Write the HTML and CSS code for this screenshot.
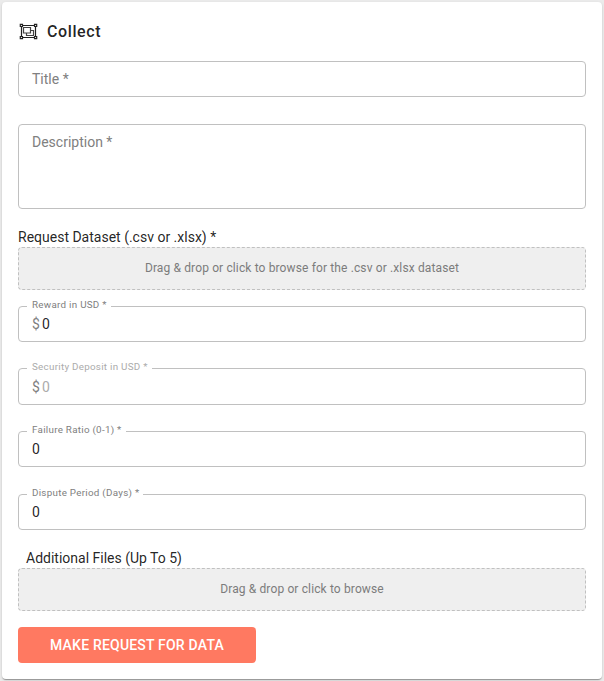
FILE: index.html
```html
<!DOCTYPE html>
<html lang="en">
<head>
<meta charset="utf-8">
<title>Collect</title>
<link rel="stylesheet" href="styles.css">
</head>
<body>
<main class="card">
  <header class="header">
    <svg class="icon" width="19" height="17" viewBox="0 0 19 17" fill="none" stroke="#222">
      <path d="M3 2.500h13M3 14.500h13M2.500 3v11M16.500 3v11" stroke-width="1.200"/>
      <path d="M4.500 4.500h7v5.500h-7zM12 7.500h2.500v5H7.500v-2" stroke="#444" stroke-width="1.200"/>
      <g fill="#fff" stroke-width="1.200"><path d="M1.300 1.300h2.200v2.200h-2.200zM15.500 1.300h2.200v2.200h-2.200zM1.300 13.500h2.200v2.200h-2.200zM15.500 13.500h2.200v2.200h-2.200z"/></g>
    </svg>
    <h1 class="title">Collect</h1>
  </header>
  <div class="field placeholder">Title *</div>
  <div class="field area placeholder">Description *</div>
  <div class="caption">Request Dataset (.csv or .xlsx) *</div>
  <div class="dropzone">Drag &amp; drop or click to browse for the .csv or .xlsx dataset</div>
  <div class="field reward"><span class="label">Reward in USD *</span><span class="prefix">$</span>0</div>
  <div class="field deposit disabled"><span class="label">Security Deposit in USD *</span><span class="prefix">$</span>0</div>
  <div class="field ratio"><span class="label">Failure Ratio (0-1) *</span>0</div>
  <div class="field period"><span class="label">Dispute Period (Days) *</span>0</div>
  <div class="caption files">Additional Files (Up To 5)</div>
  <div class="dropzone">Drag &amp; drop or click to browse</div>
  <button class="submit" type="button">MAKE REQUEST FOR DATA</button>
</main>
</body>
</html>
```
FILE: styles.css
```css
* { box-sizing: border-box; }
body {
  margin: 0;
  padding: 2px;
  height: 681px;
  overflow: hidden;
  background: #ebebeb;
  color: rgba(0, 0, 0, 0.87);
  font: 14px/20px Roboto, sans-serif;
}
.card {
  display: flex;
  flex-direction: column;
  width: 600px;
  height: 677px;
  padding: 16px;
  background: #fff;
  border-radius: 4px;
  box-shadow: 0 2px 1px -1px rgba(0, 0, 0, 0.2), 0 1px 1px rgba(0, 0, 0, 0.14), 0 1px 3px rgba(0, 0, 0, 0.12);
}
.header { display: flex; align-items: center; height: 28px; gap: 9px; margin-bottom: 15px; }
.icon { margin: 0 0 1px 1px; }
.title { margin: 0; font-size: 16px; font-weight: 500; letter-spacing: 0.6px; }
.field {
  position: relative;
  display: flex;
  align-items: center;
  flex: none;
  height: 36px;
  padding: 0 13px;
  border: 1px solid #c0c0c0;
  border-radius: 4px;
}
.area { height: 85px; margin-top: 27px; align-items: flex-start; padding-top: 7px; }
.placeholder, .prefix { color: #808080; }
.prefix { margin-right: 2px; }
.caption { height: 20px; margin-top: 18px; }
.files { margin-left: 8px; }
.dropzone {
  display: flex;
  align-items: center;
  justify-content: center;
  flex: none;
  height: 43px;
  padding-bottom: 2px;
  background: #efefef;
  border: 1px dashed #c0c0c0;
  border-radius: 4px;
  color: #7c7c7c;
  font-size: 12px;
  letter-spacing: 0.13px;
}
.label {
  position: absolute;
  left: 8px;
  top: -9px;
  padding: 0 4px 0 5px;
  background: #fff;
  color: #808080;
  font-size: 9.8px;
  line-height: 14px;
  letter-spacing: 0.28px;
  white-space: nowrap;
}
.reward { margin-top: 16px; }
.deposit { margin-top: 26px; height: 37px; }
.ratio { margin-top: 26px; }
.period { margin-top: 27px; }
.disabled, .disabled .label { color: #ababab; }
.submit {
  width: 238px;
  height: 36px;
  flex: none;
  margin-top: 16px;
  padding: 0;
  border: 0;
  border-radius: 4px;
  background: #ff7961;
  color: #fff;
  font: 500 14px/20px Roboto, sans-serif;
  letter-spacing: 0.2px;
}
```
